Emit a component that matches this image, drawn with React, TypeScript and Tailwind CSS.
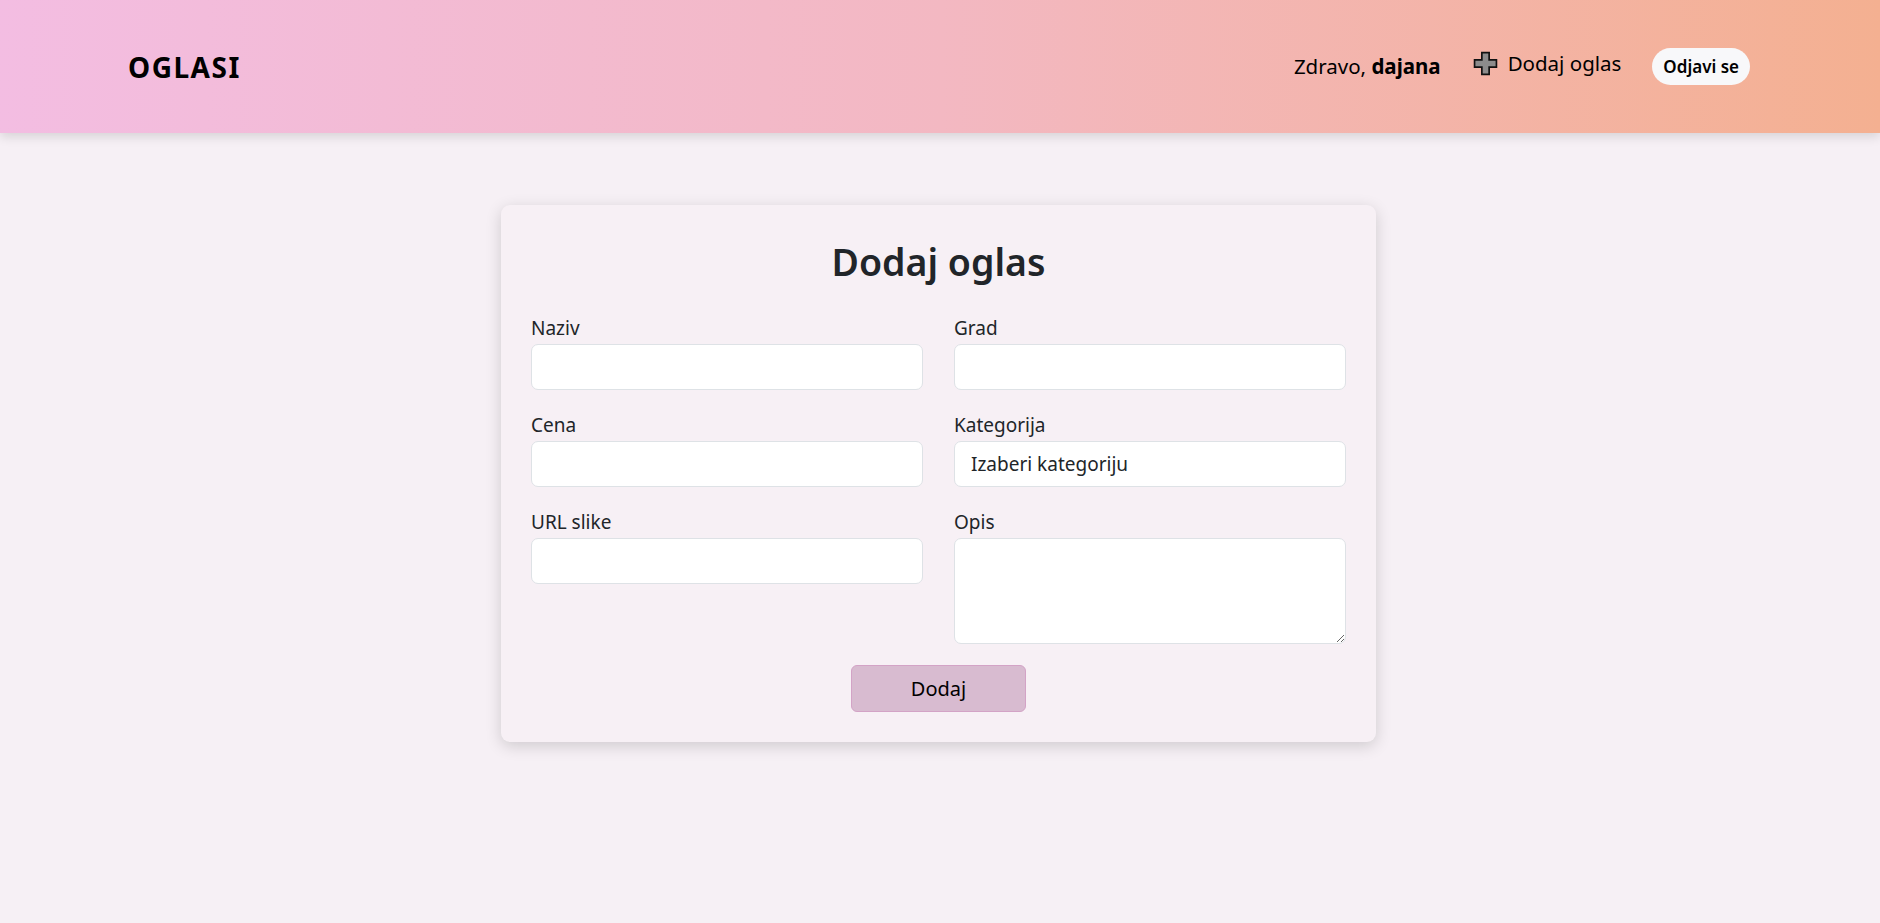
import React from "react";

function PlusIcon() {
  return (
    <svg width="25" height="25" viewBox="0 0 24 24" className="block">
      <path
        d="M8.5 1.5 H15.5 V8.5 H22.5 V15.5 H15.5 V22.5 H8.5 V15.5 H1.5 V8.5 H8.5 Z"
        fill="#8c8c8c"
        stroke="#111"
        strokeWidth="1.6"
        strokeLinejoin="miter"
      />
    </svg>
  );
}

function Field({ label, children }: { label: string; children: React.ReactNode }) {
  return (
    <div className="flex flex-col">
      <label className="text-[19px] leading-[26px] text-[#212529] mb-[3px]">{label}</label>
      {children}
    </div>
  );
}

const inputCls =
  "w-full h-[46px] rounded-[7px] border border-[#dee2e6] bg-white px-4 text-[19px] text-[#212529] outline-none";

export default function App() {
  return (
    <div
      className="min-h-[923px] bg-[#f6f0f5]"
      style={{ fontFamily: '"Segoe UI", "Noto Sans", "Open Sans", sans-serif' }}
    >
      <header className="h-[133px] bg-gradient-to-r from-[#f3bde2] via-[#f3b8c2] to-[#f4b091] shadow-[0_4px_10px_rgba(0,0,0,0.12)] flex items-center justify-between pl-[128px] pr-[130px]">
        <div className="text-[28px] font-bold tracking-[1.5px] text-black">OGLASI</div>
        <div className="flex items-center text-[20.5px] text-black">
          <span>
            Zdravo, <b className="font-bold">dajana</b>
          </span>
          <span className="flex items-center ml-[32px] gap-[10px] -mt-[6px]">
            <PlusIcon />
            <span>Dodaj oglas</span>
          </span>
          <button className="ml-[31px] h-[37px] px-[11px] rounded-full bg-[#f8f8fa] text-[17px] font-semibold text-black">
            Odjavi se
          </button>
        </div>
      </header>

      <main className="flex justify-center pt-[72px] pr-[3px]">
        <div className="w-[875px] rounded-[9px] bg-[#f7f0f5] shadow-[0_4px_16px_rgba(0,0,0,0.16)] px-[30px] pt-[29px] pb-[30px]">
          <h1 className="text-center text-[37.5px] font-semibold text-[#212529] leading-[56px] mb-[25px]">
            Dodaj oglas
          </h1>
          <div className="grid grid-cols-2 gap-x-[31px] gap-y-[22px]">
            <Field label="Naziv">
              <input className={inputCls} />
            </Field>
            <Field label="Grad">
              <input className={inputCls} />
            </Field>
            <Field label="Cena">
              <input className={inputCls} />
            </Field>
            <Field label="Kategorija">
              <div className={inputCls + " flex items-center"}>Izaberi kategoriju</div>
            </Field>
            <Field label="URL slike">
              <input className={inputCls} />
            </Field>
            <Field label="Opis">
              <textarea className="w-full h-[106px] rounded-[7px] border border-[#dee2e6] bg-white px-4 py-2 text-[19px] outline-none block" />
            </Field>
          </div>
          <div className="flex justify-center mt-[21px]">
            <button className="w-[175px] h-[47px] rounded-[6px] bg-[#d8bbd0] border border-[#d3a3c6] text-[20px] text-black">
              Dodaj
            </button>
          </div>
        </div>
      </main>
    </div>
  );
}
